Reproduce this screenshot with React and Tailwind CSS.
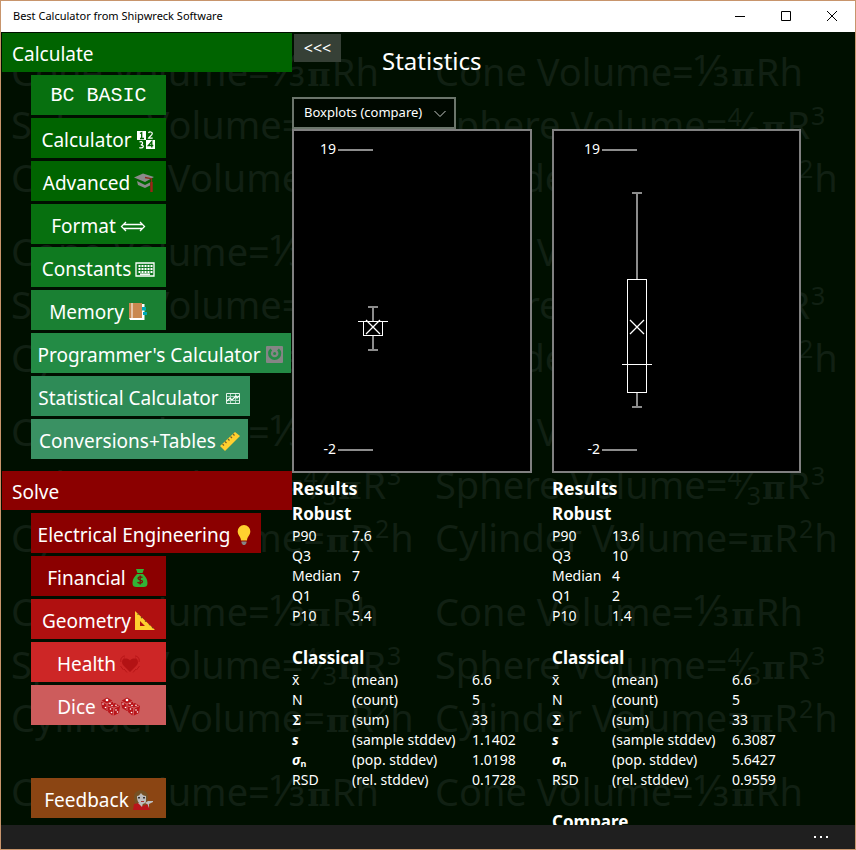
import React from "react";

function Pi() {
  return <span className="mx-px font-['DejaVu_Serif',serif] text-[32px] font-bold leading-none">π</span>;
}

function Power({ children }) {
  return <sup className="-top-[14px] mx-px align-baseline text-[25px] leading-none">{children}</sup>;
}

function ConeFormula() {
  return (
    <div>
      Cone Volume=<span className="text-[44px] leading-none">⅓</span>
      <Pi />Rh
    </div>
  );
}

function Formulas() {
  return (
    <div className="mb-[21px]">
      <ConeFormula />
      <div>
        Sphere Volume=<sup className="-top-[13px] align-baseline text-[25px] leading-none">4</sup>⁄
        <sub className="-bottom-[6px] align-baseline text-[25px] leading-none">3</sub>
        <Pi />R<Power>3</Power>
      </div>
      <div>
        Cylinder Volume=<Pi />R<Power>2</Power>h
      </div>
    </div>
  );
}

function Backdrop() {
  return (
    <div
      aria-hidden="true"
      className="pointer-events-none absolute inset-0 flex select-none overflow-hidden whitespace-nowrap pl-[10px] pt-[13px] text-[38px] leading-[53px] text-[#112013]"
    >
      {[0, 1].map((column) => (
        <div key={column} className="w-[424px] shrink-0">
          <Formulas />
          <Formulas />
          <Formulas />
          <Formulas />
          <ConeFormula />
        </div>
      ))}
    </div>
  );
}

function Icon({ children, wide }) {
  return (
    <svg
      aria-hidden="true"
      viewBox={wide ? "0 0 40 20" : "0 0 20 20"}
      className={wide ? "h-5 w-10 shrink-0" : "h-5 w-5 shrink-0"}
      fill="none"
    >
      {children}
    </svg>
  );
}

const NumbersIcon = () => (
  <Icon>
    <path fill="#fff" d="M1 1h9v9H1zM10 10h9v9h-9z" />
    <path stroke="#006400" strokeWidth="1.3" d="M4 3.5 5.7 2.600v6M4 8.500h4M15.800 17.500v-6l-3.500 4h5" />
    <path
      stroke="#fff"
      strokeWidth="1.2"
      d="M12.500 3c.5-1.400 3.800-1.500 3.800.5 0 1.800-3 3-3.800 4.700h4.200M3.500 12c3-1.500 4.500 2 1.300 2.800 4 .2 3 4-1.500 2.900"
    />
  </Icon>
);

const GraduationIcon = () => (
  <Icon>
    <path fill="#8b8b8b" d="m0 4.500 9-4 11 3.500-9 5zM3 8l8 4 5-2.500v3l-5 2.500-7-3z" />
    <path stroke="#8b2a1b" strokeWidth="1.300" d="m11 4.500 6.500 1.200V12" />
    <path stroke="#9c2418" strokeWidth="2.400" d="M17.500 9v10" />
  </Icon>
);

const ArrowIcon = () => (
  <svg aria-hidden="true" viewBox="0 0 26 20" className="h-5 w-[26px] shrink-0" fill="none" stroke="#fff" strokeWidth="1.300">
    <path d="M4 8.500h18M4 12.500h18M6 6l-4.500 4.500L6 15M20 6l4.500 4.500L20 15" />
  </svg>
);

const KeyboardIcon = () => (
  <Icon>
    <path stroke="#fff" strokeWidth="1.300" d="M1 4h18v13H1z" />
    <path stroke="#fff" strokeWidth="2" strokeDasharray="2 1" d="M3.500 7h14M3.500 10h14M3.500 13h14" />
    <path stroke="#fff" strokeWidth="1.500" d="M5 15.200h10" />
  </Icon>
);

const BookIcon = () => (
  <Icon>
    <path fill="#c98850" d="M1 1h13v15H1z" />
    <path fill="#fff" d="M14 2h2.500v16H2l-1-2h13z" />
    <path stroke="#fff" d="M4 1v15" />
    <path fill="#00a9b5" d="M14 5h4v3.500h-4zM15 10h4v3h-4z" />
  </Icon>
);

const PowerIcon = () => (
  <Icon>
    <rect x="1" y="1" width="17" height="17" rx="1" fill="#858585" />
    <path stroke="#238b45" strokeWidth="2.800" d="M6.300 4.500a5.200 5.200 0 1 0 6.700 0" />
    <circle cx="9.600" cy="8.500" r="1.500" fill="#238b45" />
  </Icon>
);

const ChartIcon = () => (
  <Icon>
    <path stroke="#a9d3bd" strokeWidth="1" d="M7.500 5v11M12.500 5v11M3 8.500h13M3 12.500h13" />
    <path stroke="#e5f3eb" strokeWidth="1" d="M3.500 5.500h13v10h-13z" />
    <path stroke="#fff" strokeWidth="1.100" d="m4 13 3-3 2 2 4-4 1 2 2-2" />
  </Icon>
);

const RulerIcon = () => (
  <Icon>
    <path fill="#ffd02f" d="M0 15 15 1l5 4L5 20z" />
    <path stroke="#77602a" strokeWidth="1.200" d="m2.500 13 1.500 1.500M5 10.500l1.500 1.500M8 8l1.500 1.500M10.500 5.500l1.500 1.500M13 3l1.500 1.500" />
  </Icon>
);

const BulbIcon = () => (
  <Icon>
    <path fill="#ffd02f" d="M10 0a6.300 6.300 0 0 0-6.300 6.500c0 4 3.300 5 3.300 9h6c0-4 3.300-5 3.300-9A6.300 6.300 0 0 0 10 0z" />
    <path fill="#858585" d="M7.500 16.500h5V18l-1.500 2H9l-1.500-2z" />
  </Icon>
);

const MoneyIcon = () => (
  <Icon>
    <path fill="#32b336" d="M6 1h8l-1.500 4H7.500zM7 6h6c2.500 2.500 4.500 5 4.500 9 0 3-1.500 4-4 4h-7c-2.500 0-4-1-4-4 0-4 2-6.500 4.500-9z" />
    <path stroke="#7f0f08" strokeWidth="1.300" d="M12.500 9.500c-1-1-4.500-1-4.500.8 0 2 4.500 1 4.500 3.200 0 1.800-3.500 2-5 .7M10.200 7.500v9" />
  </Icon>
);

const TriangleIcon = () => (
  <Icon>
    <path fill="#ffd02f" fillRule="evenodd" d="M0 0 20 19H0zM5 10v5h5z" />
    <path stroke="#75461b" strokeWidth="1.200" d="m2.500 3.500 1.500-1M6 7l1.500-1M10 10.500l1.300-1M14 14l1.300-1M17 17l1.300-1" />
  </Icon>
);

const HeartIcon = () => (
  <Icon>
    <path fill="#b31214" d="M10 18 3 11C-.500 6 6 2 10 6.500 14 2 20.500 6 17 11z" />
    <path
      stroke="#b31214"
      strokeWidth=".8"
      d="M1 8c-1-3 1-6 4-6M3 7c0-2 1-3 2-3M.500 12l3 4M19 8c1-3-1-6-4-6M17 7c0-2-1-3-2-3M19.500 12l-3 4M4 15l3 3.500M16 15l-3 3.500"
    />
  </Icon>
);

function DicePair() {
  return (
    <>
      <path fill="#b9151a" d="m1 4 6-3.500L13 4v6l-6 4-5-3z" />
      <path fill="#b9151a" d="m9 8 6-2 5 3-1 7-6 3-5-4z" />
      <path stroke="#f2b7b5" strokeWidth=".5" d="m1 4 6 3 6-3M7 7v6M8 9l6 2 5-2M14 11l-1 8" />
      <g fill="#fff">
        <circle cx="7" cy="3" r="1.300" />
        <circle cx="3" cy="7" r=".8" />
        <circle cx="5.500" cy="10.500" r=".8" />
        <circle cx="10" cy="6.500" r=".8" />
        <circle cx="12" cy="8.500" r=".8" />
        <circle cx="16" cy="8.300" r=".8" />
        <circle cx="10.500" cy="12" r=".8" />
        <circle cx="11.500" cy="15.500" r=".8" />
        <circle cx="16" cy="13" r=".8" />
        <circle cx="17.500" cy="15" r=".8" />
      </g>
    </>
  );
}

const DiceIcon = () => (
  <Icon wide>
    <DicePair />
    <g transform="translate(20 0)">
      <DicePair />
    </g>
  </Icon>
);

const PersonIcon = () => (
  <Icon>
    <path fill="#765124" d="M1 8C0-2 15-2 15 7l-1 8H2z" />
    <path fill="#bdbdbd" d="M4 6c2 0 3-2 4-3 1 2 3 3 5 3v5c0 2-2 3-4 3-4 0-5-4-5-8z" />
    <path fill="#b9151a" d="m1 14 5-1 4 3 5-2 2 6H0z" />
    <path fill="#bdbdbd" d="M5 13h5l-1 4zM12 13l3-2h5v1l-5 2.500zM14 13l2 1v4z" />
    <path fill="#333" d="M5 7h2v1.500H5zM10 7h2v1.500h-2z" />
    <path stroke="#a33" d="M8 11.500h3" />
  </Icon>
);

const calculateItems = [
  { label: "BC BASIC", tone: "w-[135px] bg-[#07700f] font-['Liberation_Mono',monospace] text-[20px] pb-[2px]" },
  { label: "Calculator", tone: "w-[135px] bg-[#006400] text-[19px]", Glyph: NumbersIcon },
  { label: "Advanced", tone: "w-[135px] bg-[#006400] text-[19px]", Glyph: GraduationIcon },
  { label: "Format", tone: "w-[135px] bg-[#07700f] text-[19px]", Glyph: ArrowIcon },
  { label: "Constants", tone: "w-[135px] bg-[#0f7a20] text-[19px]", Glyph: KeyboardIcon },
  { label: "Memory", tone: "w-[135px] bg-[#1a8033] text-[19px]", Glyph: BookIcon },
  { label: "Programmer's Calculator", tone: "w-[260px] bg-[#238b45] text-[19px]", Glyph: PowerIcon },
  { label: "Statistical Calculator", tone: "w-[219px] bg-[#2e8b57] text-[19px]", Glyph: ChartIcon },
  { label: "Conversions+Tables", tone: "w-[217px] bg-[#3a9163] text-[19px]", Glyph: RulerIcon },
];

const solveItems = [
  { label: "Electrical Engineering", tone: "w-[230px] bg-[#8b0000] text-[19px]", Glyph: BulbIcon },
  { label: "Financial", tone: "w-[135px] bg-[#8b0000] text-[19px]", Glyph: MoneyIcon },
  { label: "Geometry", tone: "w-[135px] bg-[#b01010] text-[19px]", Glyph: TriangleIcon },
  { label: "Health", tone: "w-[135px] bg-[#cd2626] text-[19px]", Glyph: HeartIcon },
  { label: "Dice", tone: "w-[135px] bg-[#cd5c5c] text-[19px]", Glyph: DiceIcon },
];

function NavButton({ label, tone, Glyph }) {
  return (
    <button
      type="button"
      className={`flex h-10 shrink-0 items-center justify-center gap-1 whitespace-nowrap pt-1 text-white ${tone}`}
    >
      <span>{label}</span>
      {Glyph && <Glyph />}
    </button>
  );
}

function NavGroup({ title, tone, items }) {
  return (
    <section>
      <h2 className={`flex h-[39px] items-center pl-[10px] pt-1 text-[19px] text-white ${tone}`}>{title}</h2>
      <div className="flex flex-col items-start gap-[3px] pl-[29px] pt-[3px]">
        {items.map((item) => (
          <NavButton key={item.label} {...item} />
        ))}
      </div>
    </section>
  );
}

const samples = [
  {
    width: "w-[240px]",
    center: 79,
    box: { max: 8, q3: 7, median: 7, mean: 6.6, q1: 6, min: 5 },
    robust: [["P90", "7.6"], ["Q3", "7"], ["Median", "7"], ["Q1", "6"], ["P10", "5.4"]],
    classical: ["6.6", "5", "33", "1.1402", "1.0198", "0.1728"],
  },
  {
    width: "w-[249px]",
    center: 83,
    box: { max: 16, q3: 10, median: 4, mean: 6.6, q1: 2, min: 1 },
    robust: [["P90", "13.6"], ["Q3", "10"], ["Median", "4"], ["Q1", "2"], ["P10", "1.4"]],
    classical: ["6.6", "5", "33", "6.3087", "5.6427", "0.9559"],
    compare: true,
  },
];

const measures = [
  ["x̄", "(mean)"],
  ["N", "(count)"],
  [<span className="font-['DejaVu_Serif',serif] text-[13px] font-bold">Σ</span>, "(sum)"],
  [<b className="italic">s</b>, "(sample stddev)"],
  [
    <span>
      <b className="italic">σ</b>
      <sub className="text-[9px] font-bold">n</sub>
    </span>,
    "(pop. stddev)",
  ],
  ["RSD", "(rel. stddev)"],
];

function BoxPlot({ width, center: x, box }) {
  const y = (value) => Math.round(19 + ((19 - value) * 300) / 21);
  return (
    <div className={`h-[344px] border-2 border-[#808080] bg-black ${width}`}>
      <svg role="img" aria-label="Boxplot" className="block h-full w-full" fill="none">
        <g fill="#fff" fontSize="14" textAnchor="end">
          <text x={x - 37} y="23">19</text>
          <text x={x - 37} y="323">-2</text>
        </g>
        <g stroke="#8c8c8c" strokeWidth="2">
          <path d={`M${x - 35} 19h35M${x - 35} 319h35`} />
          <path d={`M${x - 5} ${y(box.max)}h10M${x} ${y(box.max)}V${y(box.q3)}`} />
          <path d={`M${x - 5} ${y(box.min)}h10M${x} ${y(box.min)}V${y(box.q1)}`} />
        </g>
        <rect x={x - 9.5} y={y(box.q3) + 0.5} width="19" height={y(box.q1) - y(box.q3) - 1} stroke="#fff" />
        <path stroke="#fff" d={`M${x - 15} ${y(box.median) + 0.5}h30`} />
        <path stroke="#fff" strokeWidth="1.3" d={`M${x - 7} ${y(box.mean) - 7}l14 14M${x + 7} ${y(box.mean) - 7}l-14 14`} />
      </svg>
    </div>
  );
}

function Sample({ sample }) {
  return (
    <article>
      <BoxPlot {...sample} />
      <h2 className="pt-px text-[18px] font-bold leading-7">Results</h2>
      <h3 className="text-[17px] font-bold leading-6">Robust</h3>
      <table className="mb-5 text-[14px] leading-5">
        <tbody>
          {sample.robust.map(([name, value]) => (
            <tr key={name}>
              <th scope="row" className="w-[60px] p-0 text-left font-normal">{name}</th>
              <td className="p-0">{value}</td>
            </tr>
          ))}
        </tbody>
      </table>
      <h3 className="text-[17px] font-bold leading-6">Classical</h3>
      <table className="mb-5 text-[14px] leading-5">
        <tbody>
          {measures.map(([symbol, name], i) => (
            <tr key={name}>
              <th scope="row" className="h-5 w-[60px] p-0 text-left font-normal leading-none">{symbol}</th>
              <td className="h-5 w-[120px] whitespace-nowrap p-0">{name}</td>
              <td className="h-5 p-0">{sample.classical[i]}</td>
            </tr>
          ))}
        </tbody>
      </table>
      {sample.compare && <h3 className="text-[17px] font-bold leading-6">Compare</h3>}
    </article>
  );
}

function TitleBar() {
  return (
    <header className="flex h-[31px] shrink-0 items-center bg-white pl-3 text-[11px] text-black">
      <h1 className="grow">Best Calculator from Shipwreck Software</h1>
      <button type="button" aria-label="Minimize" className="flex h-full w-[46px] items-center justify-center">
        <svg className="h-[11px] w-[11px]" fill="none" stroke="#000"><path d="M0 5.500h10" /></svg>
      </button>
      <button type="button" aria-label="Maximize" className="flex h-full w-[46px] items-center justify-center">
        <svg className="h-[11px] w-[11px]" fill="none" stroke="#000"><path d="M.500.500h9v9h-9z" /></svg>
      </button>
      <button type="button" aria-label="Close" className="flex h-full w-[46px] items-center justify-center">
        <svg className="h-[11px] w-[11px]" fill="none" stroke="#000"><path d="m0 0 10 10M10 0 0 10" /></svg>
      </button>
    </header>
  );
}

export default function App() {
  return (
    <div className="flex h-screen flex-col overflow-hidden border border-[#c8956c] bg-[#000f00] font-['Noto_Sans','Open_Sans',sans-serif] text-white">
      <TitleBar />
      <div className="relative min-h-0 flex-1 overflow-hidden">
        <Backdrop />
        <div className="relative flex h-full pt-px">
          <nav className="ml-px flex w-[290px] shrink-0 flex-col">
            <NavGroup title="Calculate" tone="bg-[#006400]" items={calculateItems} />
            <div className="pt-3">
              <NavGroup title="Solve" tone="bg-[#8b0000]" items={solveItems} />
            </div>
            <div className="pl-[29px] pt-[53px]">
              <NavButton label="Feedback" tone="w-[135px] bg-[#8b4513] text-[19px]" Glyph={PersonIcon} />
            </div>
          </nav>
          <main className="min-w-0 flex-1">
            <div className="flex h-16 items-start gap-[41px] pl-[2px] pt-px">
              <button type="button" className="h-7 w-[47px] bg-[#364036] text-[16px] leading-7">&lt;&lt;&lt;</button>
              <h2 className="pt-[9px] text-[24px] leading-9">Statistics</h2>
            </div>
            <div className="relative h-8 w-[164px]">
              <select
                aria-label="Statistics view"
                className="h-full w-full appearance-none rounded-none border-2 border-[#6b756b] bg-[#000800] pl-[10px] text-[13px] text-white"
              >
                <option>Boxplots (compare)</option>
              </select>
              <svg aria-hidden="true" className="pointer-events-none absolute right-[10px] top-[13px] h-2 w-3" fill="none" stroke="#c4c8c4">
                <path d="m.500 1 5.500 5.500L11.500 1" />
              </svg>
            </div>
            <div className="flex gap-5">
              {samples.map((sample) => (
                <Sample key={sample.width} sample={sample} />
              ))}
            </div>
          </main>
        </div>
      </div>
      <footer className="flex h-6 shrink-0 justify-end bg-[#1f1f1f] pr-[23px]">
        <button type="button" aria-label="More" className="flex items-center gap-1 px-1">
          <span className="h-[2px] w-[2px] bg-white" />
          <span className="h-[2px] w-[2px] bg-white" />
          <span className="h-[2px] w-[2px] bg-white" />
        </button>
      </footer>
    </div>
  );
}
